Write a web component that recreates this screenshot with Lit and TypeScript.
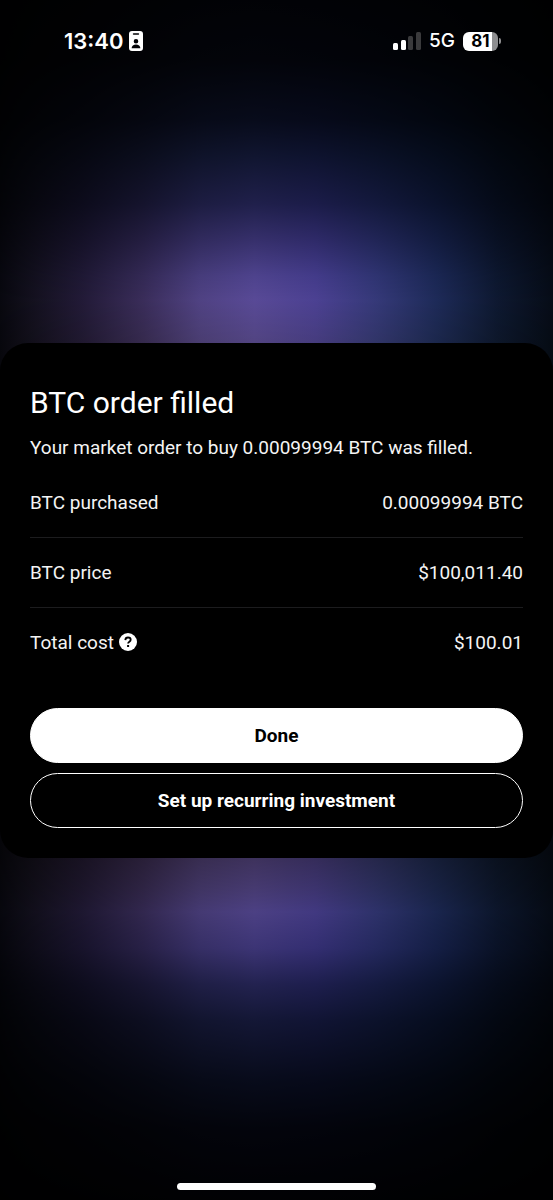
import { LitElement, html, css, svg, nothing } from "lit";
import { customElement, property } from "lit/decorators.js";

interface OrderLine {
  label: string;
  value: string;
  help?: boolean;
}

const LINES: OrderLine[] = [
  { label: "BTC purchased", value: "0.00099994 BTC" },
  { label: "BTC price", value: "$100,011.40" },
  { label: "Total cost", value: "$100.01", help: true },
];

const badgeIcon = html`<svg width="14" height="20" viewBox="0 0 14 20" aria-hidden="true">
  <path
    fill="#fff"
    fill-rule="evenodd"
    d="M3 0h8a3 3 0 0 1 3 3v14a3 3 0 0 1-3 3H3a3 3 0 0 1-3-3V3a3 3 0 0 1 3-3ZM4.6 2.2a.8.8 0 0 0 0 1.6h4.8a.8.8 0 0 0 0-1.6ZM7 8a2.300 2.300 0 1 0 0 4.600A2.300 2.300 0 0 0 7 8ZM2.600 17.200h8.800c0-2.300-2-3.700-4.400-3.700S2.600 14.900 2.600 17.200Z"
  />
</svg>`;

const signalIcon = html`<svg width="28" height="18" viewBox="0 0 28 18" role="img" aria-label="Signal strength">
  ${[
    [0, 11, 7],
    [8, 8, 10],
    [15, 4, 14],
    [23, 0, 18],
  ].map(
    ([x, y, h], i) =>
      svg`<rect x=${x} y=${y} width="5" height=${h} rx="1.5" fill=${i < 2 ? "#fff" : "#3a3a3c"} />`
  )}
</svg>`;

const helpIcon = html`<svg width="18" height="18" viewBox="0 0 18 18" aria-hidden="true">
  <circle cx="9" cy="9" r="9" fill="#fff" />
  <path
    d="M6.300 7.100C6.400 5.400 7.500 4.500 9 4.500s2.700.9 2.700 2.300c0 1.900-2.600 1.900-2.600 3.700"
    fill="none"
    stroke="#000"
    stroke-width="1.800"
  />
  <rect x="8.100" y="12" width="2" height="2" fill="#000" />
</svg>`;

@customElement("status-bar")
class StatusBar extends LitElement {
  static styles = css`
    :host {
      display: flex;
      justify-content: space-between;
      align-items: center;
      height: 20px;
      padding: 31px 52px 0 64px;
      font-family: Inter, sans-serif;
      color: #fff;
    }
    .group {
      display: flex;
      align-items: center;
    }
    .left {
      gap: 6px;
    }
    .right {
      gap: 8px;
    }
    .time {
      font-size: 22px;
      line-height: 20px;
      font-weight: 600;
    }
    .network {
      font-size: 19px;
      line-height: 20px;
      font-weight: 500;
    }
    .battery {
      display: flex;
      align-items: center;
      gap: 1px;
    }
    .cell {
      width: 35px;
      border-radius: 6px;
      background: linear-gradient(to right, #fff 83%, #8e8e90 83%);
      color: #000;
      font-size: 17px;
      line-height: 19px;
      font-weight: 700;
      text-align: center;
    }
    .cap {
      width: 2px;
      height: 6px;
      border-radius: 0 2px 2px 0;
      background: #8e8e90;
    }
  `;

  render() {
    return html`
      <div class="group left"><span class="time">13:40</span>${badgeIcon}</div>
      <div class="group right">
        ${signalIcon}
        <span class="network">5G</span>
        <div class="battery"><span class="cell">81</span><span class="cap"></span></div>
      </div>
    `;
  }
}

@customElement("order-card")
class OrderCard extends LitElement {
  @property({ attribute: false }) lines: OrderLine[] = [];

  static styles = css`
    :host {
      display: block;
      box-sizing: border-box;
      padding: 40px 30px 30px;
      border-radius: 28px;
      background: #000;
      color: #fff;
    }
    .title {
      margin: 0;
      font-size: 30px;
      line-height: 40px;
      font-weight: 400;
    }
    .summary {
      margin: 10px 0 5px;
      font-size: 19px;
      line-height: 30px;
      color: #f4f4f4;
    }
    .lines {
      margin: 0;
    }
    .line {
      box-sizing: border-box;
      display: flex;
      justify-content: space-between;
      align-items: center;
      height: 70px;
      border-bottom: 1px solid #1c1c1e;
      font-size: 19px;
      line-height: 25px;
      color: #f4f4f4;
    }
    .line:last-child {
      border-bottom-color: transparent;
    }
    .label {
      display: flex;
      align-items: center;
      gap: 5px;
    }
    .value {
      margin: 0;
    }
    .help {
      display: flex;
      padding: 0;
      border: 0;
      background: none;
    }
    .actions {
      display: grid;
      gap: 10px;
      margin-top: 30px;
    }
    .action {
      height: 55px;
      padding: 0;
      border: 1px solid #fff;
      border-radius: 28px;
      font: inherit;
      font-size: 19px;
      font-weight: 700;
      background: #000;
      color: #fff;
    }
    .primary {
      background: #fff;
      color: #000;
    }
  `;

  render() {
    return html`
      <h1 class="title">BTC order filled</h1>
      <p class="summary">Your market order to buy 0.00099994 BTC was filled.</p>
      <dl class="lines">
        ${this.lines.map(
          (line) => html`<div class="line">
            <dt class="label">
              ${line.label}
              ${line.help
                ? html`<button class="help" type="button" aria-label="About total cost">${helpIcon}</button>`
                : nothing}
            </dt>
            <dd class="value">${line.value}</dd>
          </div>`
        )}
      </dl>
      <div class="actions">
        <button class="action primary" type="button">Done</button>
        <button class="action" type="button">Set up recurring investment</button>
      </div>
    `;
  }
}

@customElement("app-root")
class AppRoot extends LitElement {
  static styles = css`
    :host {
      display: grid;
      grid-template-rows: 1fr auto 1fr;
      min-height: 100vh;
      font-family: Roboto, sans-serif;
      background-image: linear-gradient(
          to bottom,
          rgb(4, 8, 10) 0%,
          rgb(8, 14, 17) 5%,
          rgb(22, 38, 45) 10%,
          rgb(46, 72, 80) 13%,
          rgb(90, 108, 126) 17%,
          rgb(154, 162, 180) 20%,
          rgb(220, 226, 236) 23%,
          rgb(250, 250, 252) 25%,
          rgb(228, 228, 212) 29%,
          rgb(170, 164, 148) 71%,
          rgb(198, 197, 188) 74%,
          rgb(215, 218, 221) 76%,
          rgb(170, 178, 196) 79%,
          rgb(98, 116, 134) 82%,
          rgb(56, 78, 90) 85%,
          rgb(22, 38, 45) 90%,
          rgb(9, 15, 20) 94%,
          rgb(2, 3, 6) 100%
        ),
        linear-gradient(
          to right,
          #08080f 0%,
          #14111f 6%,
          #231b38 15%,
          #3b2e5b 26%,
          #514384 36%,
          #5a4b98 46%,
          #4d4294 57%,
          #363a7a 68%,
          #1e2b59 79%,
          #0e1931 90%,
          #060c17 100%
        );
      background-blend-mode: multiply;
    }
    .status {
      align-self: start;
    }
    .home {
      align-self: end;
      justify-self: center;
      width: 36%;
      height: 7px;
      margin-bottom: 10px;
      border-radius: 4px;
      background: #fff;
    }
  `;

  render() {
    return html`
      <status-bar class="status"></status-bar>
      <order-card .lines=${LINES}></order-card>
      <div class="home"></div>
    `;
  }
}
